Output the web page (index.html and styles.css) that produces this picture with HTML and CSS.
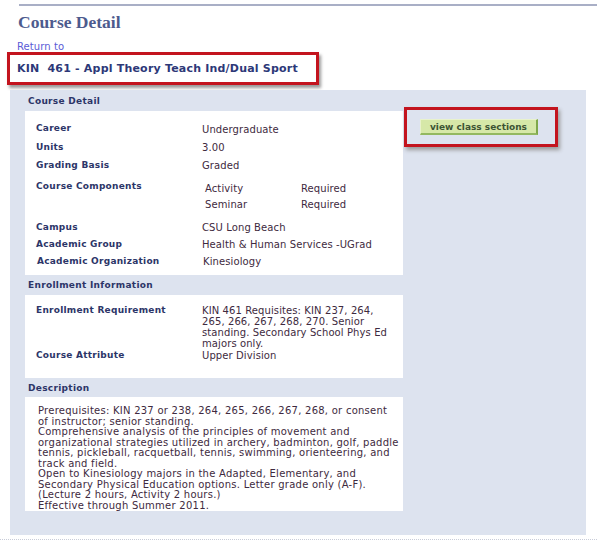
FILE: index.html
```html
<!DOCTYPE html>
<html>
<head>
<meta charset="utf-8">
<link rel="stylesheet" href="styles.css">
</head>
<body>
<div class="topline"></div>
<h1 class="page-title">Course Detail</h1>
<a class="return" href="#">Return to</a>
<div class="titlebox">KIN&nbsp; 461 - Appl Theory Teach Ind/Dual Sport</div>
<div class="panel">
  <div class="main">
    <div class="sec-head first">Course Detail</div>
    <div class="box detail">
      <div class="row r-career"><span class="lbl">Career</span><span class="val">Undergraduate</span></div>
      <div class="row r-units"><span class="lbl">Units</span><span class="val">3.00</span></div>
      <div class="row r-grading"><span class="lbl">Grading Basis</span><span class="val">Graded</span></div>
      <div class="row r-comp"><span class="lbl">Course Components</span>
        <div class="comps">
          <span>Activity</span><span>Required</span>
          <span>Seminar</span><span>Required</span>
        </div>
      </div>
      <div class="row r-campus"><span class="lbl">Campus</span><span class="val">CSU Long Beach</span></div>
      <div class="row r-group"><span class="lbl">Academic Group</span><span class="val">Health &amp; Human Services -UGrad</span></div>
      <div class="row r-org"><span class="lbl">Academic Organization</span><span class="val">Kinesiology</span></div>
    </div>
    <div class="sec-head">Enrollment Information</div>
    <div class="box enroll">
      <div class="row r-req"><span class="lbl">Enrollment Requirement</span><span class="val">KIN 461 Requisites: KIN 237, 264,<br>265, 266, 267, 268, 270. Senior<br>standing. Secondary School Phys Ed<br>majors only.</span></div>
      <div class="row r-attr"><span class="lbl">Course Attribute</span><span class="val">Upper Division</span></div>
    </div>
    <div class="sec-head desc-head">Description</div>
    <div class="box desc">
      <p>Prerequisites: KIN 237 or 238, 264, 265, 266, 267, 268, or consent<br>of instructor; senior standing.</p>
      <p>Comprehensive analysis of the principles of movement and<br>organizational strategies utilized in archery, badminton, golf, paddle<br>tennis, pickleball, racquetball, tennis, swimming, orienteering, and<br>track and field.</p>
      <p>Open to Kinesiology majors in the Adapted, Elementary, and<br>Secondary Physical Education options. Letter grade only (A-F).<br>(Lecture 2 hours, Activity 2 hours.)</p>
      <p>Effective through Summer 2011.</p>
    </div>
  </div>
  <div class="side">
    <div class="btnbox"><button class="btn">view class sections</button></div>
  </div>
</div>
<div class="bottomline"></div>
</body>
</html>
```

FILE: styles.css
```css
html, body {
  margin: 0;
  padding: 0;
  background: #ffffff;
}
body {
  font-family: "DejaVu Sans", Verdana, sans-serif;
  font-size: 10px;
  letter-spacing: 0.1px;
  color: #3a2b3c;
  width: 597px;
  height: 540px;
  overflow: hidden;
}
.topline {
  margin: 4px 0 0 19px;
  height: 2px;
  background: #a9afc6;
}
.page-title {
  font-family: "Liberation Serif", "Times New Roman", serif;
  font-weight: bold;
  font-size: 17.5px;
  letter-spacing: 0;
  color: #4d5b8e;
  margin: 6px 0 0 18px;
  line-height: 20px;
}
.return {
  display: block;
  margin: 10px 0 0 17px;
  font-size: 10px;
  line-height: 10px;
  color: #5b5bd6;
  text-decoration: none;
}
.titlebox {
  margin: 0 0 0 7px;
  width: 299px;
  height: 27px;
  border: 3px solid #c3141e;
  box-shadow: 2px 3px 3px #9a9a9a;
  font-weight: bold;
  font-size: 11px;
  letter-spacing: 0.2px;
  line-height: 27px;
  padding-left: 7px;
  color: #2d3878;
  white-space: nowrap;
}
.panel {
  margin: 5px 0 0 10px;
  width: 576px;
  height: 445px;
  background: #dde3ef;
  display: flex;
}
.main {
  width: 378px;
  margin-left: 15px;
}
.sec-head {
  font-weight: bold;
  font-size: 9px;
  letter-spacing: 0.3px;
  color: #2c3568;
  line-height: 11px;
  margin: 5px 0 4px 3px;
}
.sec-head.first {
  margin-top: 6px;
}
.sec-head.desc-head {
  margin-bottom: 3px;
}
.box {
  background: #ffffff;
}
.row {
  display: flex;
  align-items: flex-start;
  line-height: 11px;
}
.lbl {
  width: 166px;
  margin-left: 11px;
  font-weight: bold;
  font-size: 9px;
  letter-spacing: 0.25px;
  color: #2c3568;
  flex: none;
}
.val {
  color: #3e2a40;
  white-space: nowrap;
}
.detail {
  padding-top: 12px;
  height: 164px;
  box-sizing: border-box;
}
.r-career .val { padding-top: 1px; }
.r-units { margin-top: 7px; }
.r-grading { margin-top: 7px; }
.r-comp { margin-top: 10px; height: 41px; }
.r-comp .comps {
  display: grid;
  grid-template-columns: 96px auto;
  row-gap: 5px;
  margin-left: 3px;
  margin-top: 2px;
  color: #3e2a40;
}
.r-group { margin-top: 6px; }
.r-org { margin-top: 6px; }
.r-org .lbl { margin-left: 12px; }
.enroll {
  padding-top: 10px;
  height: 83px;
  box-sizing: border-box;
}
.r-attr { margin-top: 1px; }
.desc {
  padding: 9px 2px 0 13px;
  height: 114px;
  box-sizing: border-box;
}
.desc p {
  margin: 0;
  line-height: 10.5px;
  letter-spacing: 0.25px;
  white-space: nowrap;
  color: #3e2a40;
}
.side {
  margin-left: 1px;
  padding-top: 17px;
}
.btnbox {
  width: 154px;
  height: 40px;
  border: 3px solid #c3141e;
  box-shadow: 2px 3px 4px #9a9a9a;
  padding: 9px 0 0 13px;
  box-sizing: border-box;
}
.btn {
  display: block;
  width: 118px;
  height: 16px;
  padding: 0;
  margin: 0;
  background: #d6e8a8;
  border: none;
  border-left: 1px solid #e8f2cc;
  border-top: 1px solid #e8f2cc;
  border-right: 2px solid #7ea84a;
  border-bottom: 2px solid #93b860;
  font-family: "DejaVu Sans", Verdana, sans-serif;
  font-weight: bold;
  font-size: 9px;
  color: #3d5434;
  line-height: 12px;
}
.bottomline {
  margin-top: 4px;
  border-top: 1px dotted #c8ccd8;
}
```
